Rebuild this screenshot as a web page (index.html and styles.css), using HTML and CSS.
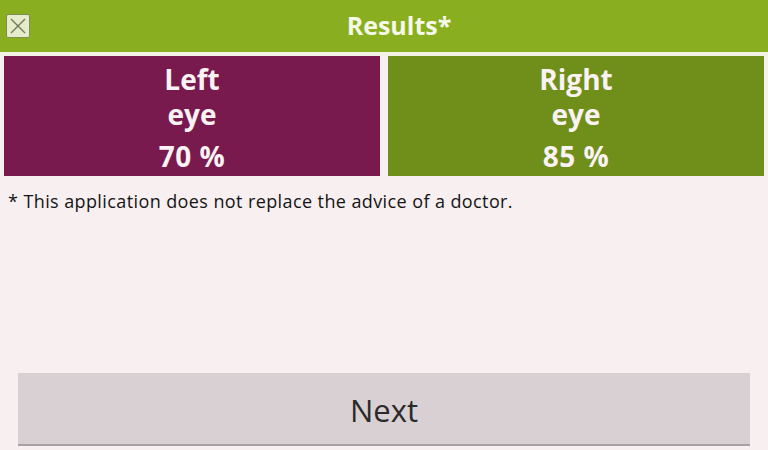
FILE: index.html
```html
<!DOCTYPE html>
<html>
<head>
<meta charset="utf-8">
<link rel="stylesheet" href="styles.css">
</head>
<body>
<div class="app">
  <header class="header">
    <button class="close" aria-label="Close">
      <svg width="18" height="18" viewBox="0 0 18 18"><path d="M2 2 L16 16 M16 2 L2 16" stroke="#6e7a5a" stroke-width="1.4" fill="none"/></svg>
    </button>
    <h1 class="title">Results*</h1>
  </header>
  <div class="sep"></div>
  <div class="results">
    <div class="card card-left">
      <div>Left</div>
      <div>eye</div>
      <div class="pct">70 %</div>
    </div>
    <div class="card card-right">
      <div>Right</div>
      <div>eye</div>
      <div class="pct">85 %</div>
    </div>
  </div>
  <p class="note">* This application does not replace the advice of a doctor.</p>
  <div class="spacer"></div>
  <div class="footer">
    <button class="next">Next</button>
  </div>
</div>
</body>
</html>
```
FILE: styles.css
```css
* { box-sizing: border-box; }
html, body {
  margin: 0;
  padding: 0;
  width: 768px;
  height: 450px;
  overflow: hidden;
  background: #f8eff0;
  font-family: "Open Sans", "DejaVu Sans", sans-serif;
}
.app {
  display: flex;
  flex-direction: column;
  height: 450px;
}
.header {
  height: 52px;
  background: #89af21;
  display: flex;
  align-items: center;
  position: relative;
  padding-left: 6px;
}
.close {
  width: 24px;
  height: 24px;
  padding: 0;
  border: 1px solid #7d9050;
  border-radius: 2px;
  background: #e6ebcc;
  display: flex;
  align-items: center;
  justify-content: center;
}
.title {
  flex: 1;
  margin: -3px 0 0 0;
  text-align: center;
  color: #f6f8e8;
  font-size: 25px;
  font-weight: 700;
}
.sep {
  height: 4px;
  background: #f3f1e4;
}
.results {
  display: flex;
  gap: 8px;
  padding: 0 4px;
  height: 120px;
}
.card {
  flex: 1;
  display: flex;
  flex-direction: column;
  align-items: center;
  color: #fbf2f4;
  font-weight: 700;
  font-size: 28px;
  line-height: 35px;
  padding-top: 6px;
}
.card .pct { margin-top: 7px; letter-spacing: 0.5px; }
.card-left { background: #781a4e; }
.card-right { background: #6f8f1a; }
.note {
  margin: 13px 0 0 8px;
  font-size: 18px;
  letter-spacing: 0.4px;
  color: #141414;
  line-height: 24px;
}
.spacer { flex: 1; }
.footer {
  padding: 0 18px 4px 18px;
}
.next {
  width: 100%;
  height: 73px;
  background: #d9d0d3;
  border: none;
  border-bottom: 2px solid #a8a2a5;
  font-family: "Open Sans", sans-serif;
  font-size: 31px;
  color: #2a2a2a;
  padding: 2px 0 0 0;
}
```
